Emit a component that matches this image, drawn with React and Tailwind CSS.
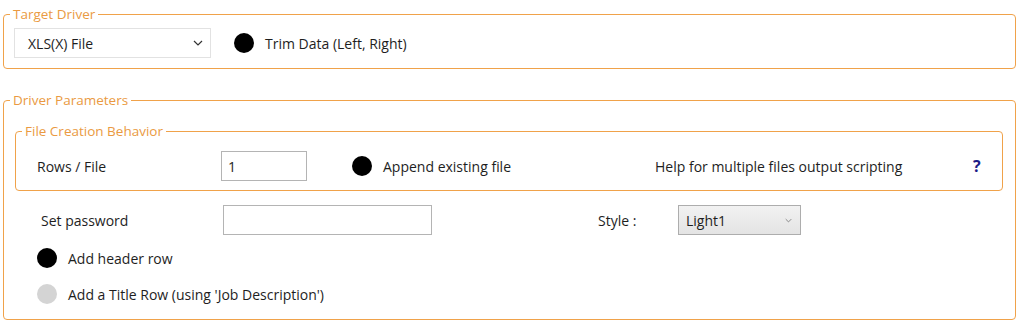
import React from 'react'

// small helpers for the WPF-ish form
function Dot({ on = true }) {
  return <span className={`inline-block w-[20px] h-[20px] rounded-full shrink-0 ${on ? 'bg-black' : 'bg-[#d4d4d4]'}`} />
}

// fieldset keeps no padding so the legend sits 6px in from the corner
function Group({ title, className = '', bodyClass = '', children }) {
  return (
    <fieldset className={`border border-[#f0a24a] rounded-[4px] ${className}`}>
      <legend className="ml-[6px] px-[3px] text-[13.5px] leading-[18px] text-[#ea9a42]">{title}</legend>
      <div className={bodyClass}>{children}</div>
    </fieldset>
  )
}

function Chevron({ className = '' }) {
  return (
    <svg viewBox="0 0 10 6" className={className} fill="none" stroke="currentColor" strokeWidth="1.2">
      <path d="M1 1 L5 5 L9 1" />
    </svg>
  )
}

export default function App() {
  return (
    <div className="w-[1024px] h-[324px] bg-white overflow-hidden text-[14px] text-[#1e1e1e]" style={{ fontFamily: '"Open Sans", "Noto Sans", sans-serif' }}>
      {/* ═══ Target Driver ═══ */}
      <Group title="Target Driver" className="mt-[5px] ml-[3px] w-[1013px]" bodyClass="pt-[5px] pb-[10px] pl-[10px]">
        <div className="flex items-center">
          <div className="w-[197px] h-[30px] border border-[#e2e2e2] bg-white flex items-center justify-between pl-[13px] pr-[7px]">
            <span>XLS(X) File</span>
            <Chevron className="w-[10px] h-[6px] text-[#333]" />
          </div>
          <div className="flex items-center ml-[23px] gap-[11px]">
            <Dot />
            <span>Trim Data (Left, Right)</span>
          </div>
        </div>
      </Group>

      {/* ═══ Driver Parameters ═══ */}
      <Group title="Driver Parameters" className="mt-[22px] ml-[3px] w-[1013px] h-[229px]" bodyClass="pt-[13px] pl-[11px] pr-[12px]">
        <Group title="File Creation Behavior" bodyClass="pt-[11px] pb-[9px] pl-[21px]">
          <div className="flex items-center h-[30px]">
            <span className="w-[184px]">Rows / File</span>
            <div className="w-[86px] h-[30px] border border-[#b4b4b4] bg-white flex items-center pl-[6px]">1</div>
            <div className="w-[303px] flex items-center ml-[45px] gap-[11px]">
              <Dot />
              <span>Append existing file</span>
            </div>
            <span className="w-[318px]">Help for multiple files output scripting</span>
            <span className="font-bold text-[16px] text-[#1b1b86]">?</span>
          </div>
        </Group>

        <div className="flex items-center h-[30px] mt-[14px] pl-[26px]">
          <span className="w-[182px]">Set password</span>
          <div className="w-[209px] h-[30px] border border-[#b4b4b4] bg-white" />
          <span className="ml-[166px] w-[80px]">Style :</span>
          <div className="w-[123px] h-[30px] border border-[#adadad] bg-gradient-to-b from-[#f2f2f2] to-[#e4e4e4] flex items-center justify-between pl-[7px] pr-[8px]">
            <span>Light1</span>
            <Chevron className="w-[7px] h-[5px] text-[#777]" />
          </div>
        </div>

        <div className="flex items-center gap-[11px] mt-[12px] pl-[22px] h-[22px]">
          <Dot />
          <span>Add header row</span>
        </div>
        <div className="flex items-center gap-[11px] mt-[14px] pl-[22px] h-[22px]">
          <Dot on={false} />
          <span>Add a Title Row (using 'Job Description')</span>
        </div>
      </Group>
    </div>
  )
}
